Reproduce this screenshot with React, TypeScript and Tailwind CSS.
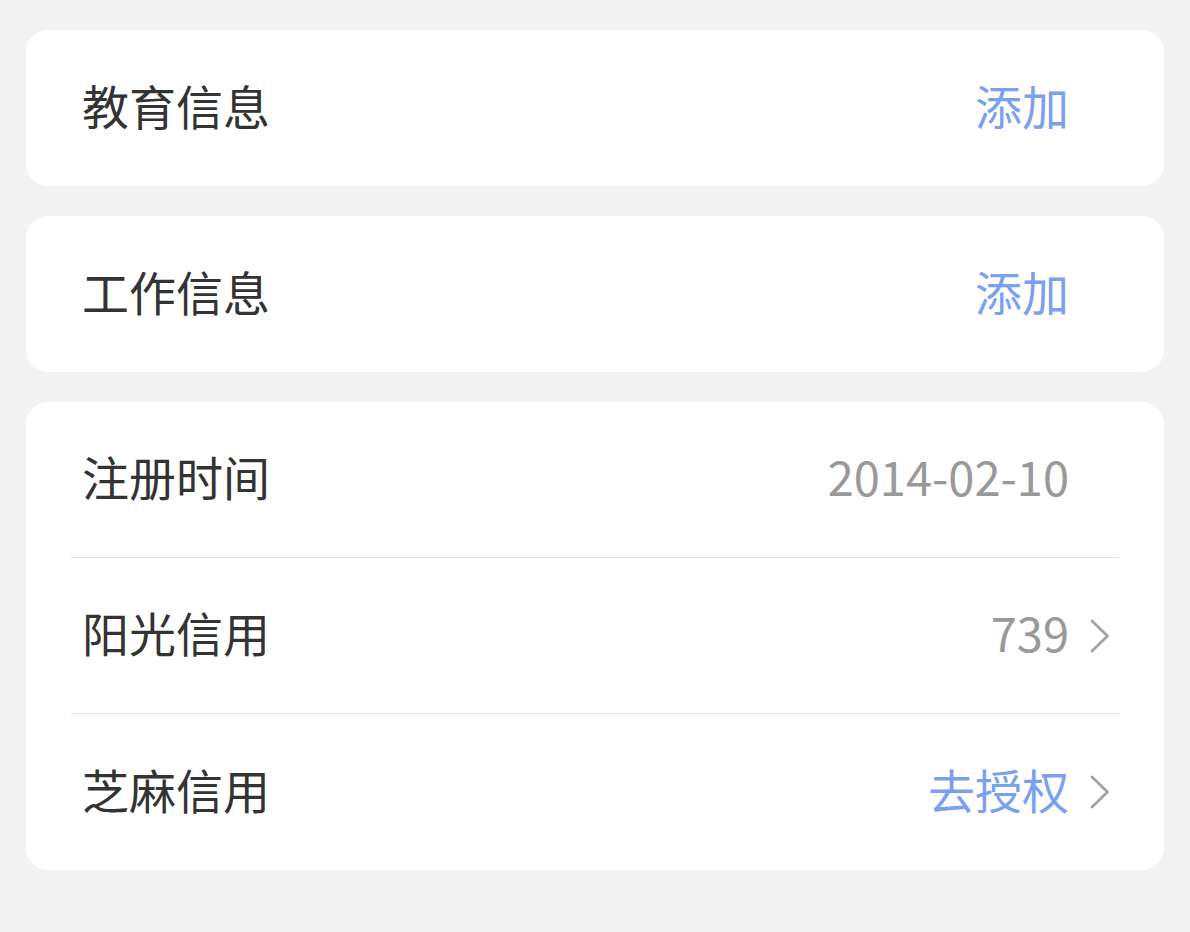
import React from "react";

const Chevron = () => (
  <svg width="20" height="34" viewBox="0 0 20 34" fill="none" className="shrink-0">
    <path d="M2 2 L17.5 17 L2 32" stroke="#a3a3a3" strokeWidth="2.8" strokeLinecap="round" strokeLinejoin="round" />
  </svg>
);

type RowProps = {
  label: string;
  value: string;
  valueClass: string;
  chevron?: boolean;
  divider?: boolean;
};

const Row = ({ label, value, valueClass, chevron, divider }: RowProps) => (
  <div className={`flex h-[156px] items-center pb-[6px] ${divider ? "border-b border-[#e3e3e3]" : ""}`}>
    <span className="pl-[11px] text-[47px] text-[#333333]">{label}</span>
    <div className="ml-auto flex items-center">
      <span className={`text-[47px] ${valueClass}`}>{value}</span>
      <div className="flex w-[50px] justify-end pr-[9px] pt-[6px]">{chevron ? <Chevron /> : null}</div>
    </div>
  </div>
);

export default function App() {
  return (
    <div
      className="flex min-h-[932px] w-[1190px] flex-col gap-[30px] bg-[#f3f3f3] px-[26px] pt-[30px]"
      style={{ fontFamily: '"Noto Sans CJK SC", "Noto Sans", sans-serif' }}
    >
      <div className="rounded-[22px] bg-white px-[45px]">
        <Row label="教育信息" value="添加" valueClass="text-[#7aa0ef]" />
      </div>
      <div className="rounded-[22px] bg-white px-[45px]">
        <Row label="工作信息" value="添加" valueClass="text-[#7aa0ef]" />
      </div>
      <div className="rounded-[22px] bg-white px-[45px]">
        <Row label="注册时间" value="2014-02-10" valueClass="text-[#999999]" divider />
        <Row label="阳光信用" value="739" valueClass="text-[#999999]" chevron divider />
        <Row label="芝麻信用" value="去授权" valueClass="text-[#7aa0ef]" chevron />
      </div>
    </div>
  );
}
